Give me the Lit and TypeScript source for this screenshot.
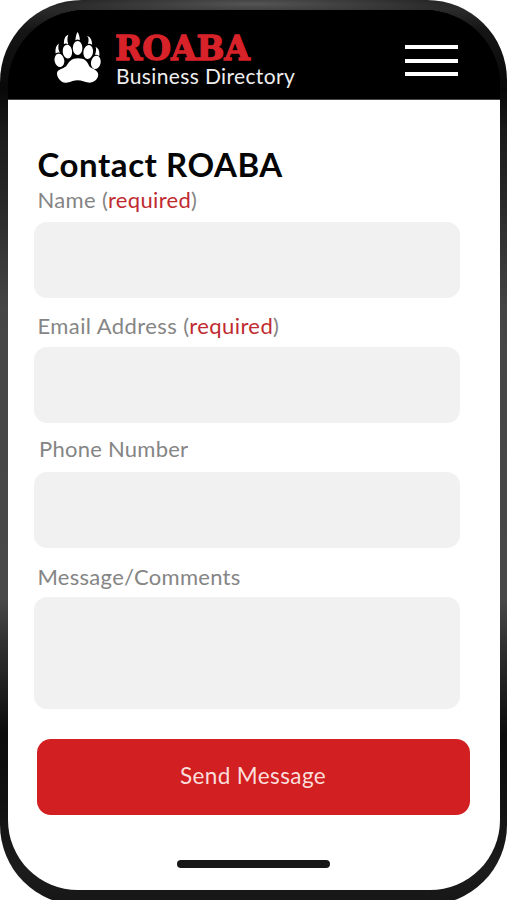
import { LitElement, html, css, svg } from "lit";
import { customElement } from "lit/decorators.js";

interface Field {
  id: string;
  label: string;
  required: boolean;
}

const FIELDS: Field[] = [
  { id: "name", label: "Name", required: true },
  { id: "email", label: "Email Address", required: true },
  { id: "phone", label: "Phone Number", required: false },
  { id: "message", label: "Message/Comments", required: false },
];

const paw = svg`
  <g fill="#fff">
    <ellipse cx="5.4" cy="28.4" rx="4.8" ry="6.7" transform="rotate(-12 5.4 28.4)"/>
    <ellipse cx="13.4" cy="19.6" rx="4.7" ry="7" transform="rotate(-6 13.4 19.6)"/>
    <ellipse cx="23.600" cy="16" rx="4.8" ry="7"/>
    <ellipse cx="34.2" cy="20" rx="4.8" ry="7" transform="rotate(8 34.2 20)"/>
    <ellipse cx="41.8" cy="30.4" rx="4.8" ry="6.7" transform="rotate(12 41.8 30.4)"/>
    <path d="M1.600 21.400C1 17 2 13.400 4.800 11.400C4 15 4.200 18 5.900 21C4.500 20.200 3 20.400 1.600 21.400Z"/>
    <path d="M9.900 12C10 7 11 4 14.400 2.800C13 6 13.200 9 14.300 12.200C12.700 11.200 11.300 11.200 9.900 12Z"/>
    <path d="M21.400 8.300C21.700 4 22.600 1.500 23.600 0C24.800 1.600 25.600 4.300 25.900 8.300C24.300 7.300 22.900 7.300 21.400 8.300Z"/>
    <path d="M33.800 12C35 9 35 6.200 33.200 4C36.600 5 37.900 8 38.200 12.700C36.700 11.500 35.100 11.500 33.800 12Z"/>
    <path d="M41 23C42.200 19.600 42.400 17 41.600 15C44.400 16 45.800 19 45.300 24.200C43.900 23 42.400 22.600 41 23Z"/>
    <path d="M24 26.200C30.500 26.200 33.200 29 34.800 33.200C36 36.700 43.800 37 44.200 42.200C44.500 47 39.500 51 34.300 50.600C30.500 50.400 28 48.200 23 48.300C18 48.400 16 50.900 11.500 50.700C6.500 50.500 2.200 44.500 3.100 40.400C4.200 36.900 10.500 36.700 12.900 33.200C14.900 29.800 17.500 26.200 24 26.200Z"/>
  </g>`;

@customElement("app-root")
export class AppRoot extends LitElement {
  static styles = css`
    :host {
      display: block;
      width: 507px;
      height: 900px;
      overflow: hidden;
      background: #fff;
      font-family: Lato, "Liberation Sans", sans-serif;
    }
    .phone {
      box-sizing: border-box;
      width: 507px;
      height: 905px;
      padding: 10px 7px 15px 8px;
      border-radius: 82px 80px 80px 80px;
      background:
        radial-gradient(ellipse 200px 12px at 50% 4px, #555 0, #5550 100%),
        linear-gradient(#222 0, #2b2b2b 9px, #151515 30px, #080808 90px, #1a1a1a 130px,
        #282828 200px, #454545 310px, #484848 600px, #333 640px, #0b0b0b 735px,
        #111 800px, #1c1c1c 870px, #161616 905px);
    }
    .screen {
      display: flex;
      flex-direction: column;
      height: 880px;
      overflow: hidden;
      border-radius: 78px 76px 70px 70px / 76px 74px 70px 70px;
      background: linear-gradient(#000 80px, #fff 80px);
    }
    header {
      box-sizing: border-box;
      flex: none;
      display: flex;
      align-items: flex-start;
      height: 90px;
      padding: 22px 42px 0 46px;
      background: #000;
      color: #fff;
      border-bottom: 1px solid #444;
    }
    .paw {
      flex: none;
      width: 48px;
      height: 52px;
    }
    .brand {
      flex: 1;
      padding-left: 13px;
      white-space: nowrap;
    }
    .name {
      height: 33px;
      font: bold 33px/33px "DejaVu Serif", serif;
      letter-spacing: -0.1px;
      color: #d8222a;
      -webkit-text-stroke: 1.3px #d8222a;
    }
    .tagline {
      padding-left: 1px;
      font-size: 21px;
      line-height: 22px;
      letter-spacing: 0.37px;
      color: #eee;
    }
    .menu {
      display: flex;
      flex-direction: column;
      justify-content: space-between;
      width: 53px;
      height: 44px;
      padding: 13px 0 0;
      border: 0;
      background: none;
    }
    .menu i {
      height: 4px;
      background: #fff;
    }
    form {
      display: flex;
      flex-direction: column;
      padding: 46px 40px 0 26px;
    }
    h1 {
      margin: 0 0 0 3.5px;
      font-size: 33px;
      line-height: 36px;
      font-weight: 700;
      letter-spacing: 0.56px;
      color: #050505;
      white-space: nowrap;
    }
    label {
      padding-left: 3.5px;
      height: 28px;
      font-size: 22px;
      line-height: 28px;
      letter-spacing: 0.33px;
      color: #858585;
      white-space: nowrap;
    }
    label b {
      font-weight: 400;
      color: #bf2b30;
    }
    .name-label { margin: 4px 0 8px; }
    .email-label { margin: 14px 0 7px; letter-spacing: 0.41px; }
    .phone-label { margin: 12px 0 9px; padding-left: 5px; letter-spacing: 0.25px; }
    .message-label { margin: 15px 0 6px; letter-spacing: 0.28px; }
    .box {
      box-sizing: border-box;
      display: block;
      width: 426px;
      height: 76px;
      margin: 0;
      padding: 12px;
      border: 0;
      border-radius: 13px;
      background: #f1f1f1;
      resize: none;
      outline: 0;
      font: inherit;
    }
    textarea.box { height: 112px; }
    .send {
      width: 433px;
      height: 76px;
      margin: 30px 0 0 3px;
      padding: 0 1px 2px 0;
      border: 0;
      border-radius: 14px;
      background: #d21f21;
      color: #fbdedb;
      font: 22.5px/26px Lato, "Liberation Sans", sans-serif;
      letter-spacing: 0.4px;
    }
    .home {
      flex: none;
      width: 153px;
      height: 8px;
      margin: 45px 0 0 169px;
      border-radius: 4px;
      background: #171717;
    }
  `;

  private field(f: Field) {
    return html`
      <label class="${f.id}-label" for=${f.id}><span>${f.label}${f.required
        ? html` (<b>required</b>)`
        : ""}</span></label>
      ${f.id === "message"
        ? html`<textarea class="box" id=${f.id}></textarea>`
        : html`<input class="box" id=${f.id} />`}
    `;
  }

  render() {
    return html`
      <div class="phone">
        <main class="screen">
          <header>
            <svg class="paw" viewBox="0 0 48 52">${paw}</svg>
            <div class="brand">
              <div class="name">ROABA</div>
              <div class="tagline">Business Directory</div>
            </div>
            <button class="menu" aria-label="Menu"><i></i><i></i><i></i></button>
          </header>
          <form>
            <h1><span>Contact ROABA</span></h1>
            ${FIELDS.map((f) => this.field(f))}
            <button class="send" type="button"><span>Send Message</span></button>
          </form>
          <div class="home"></div>
        </main>
      </div>
    `;
  }
}
